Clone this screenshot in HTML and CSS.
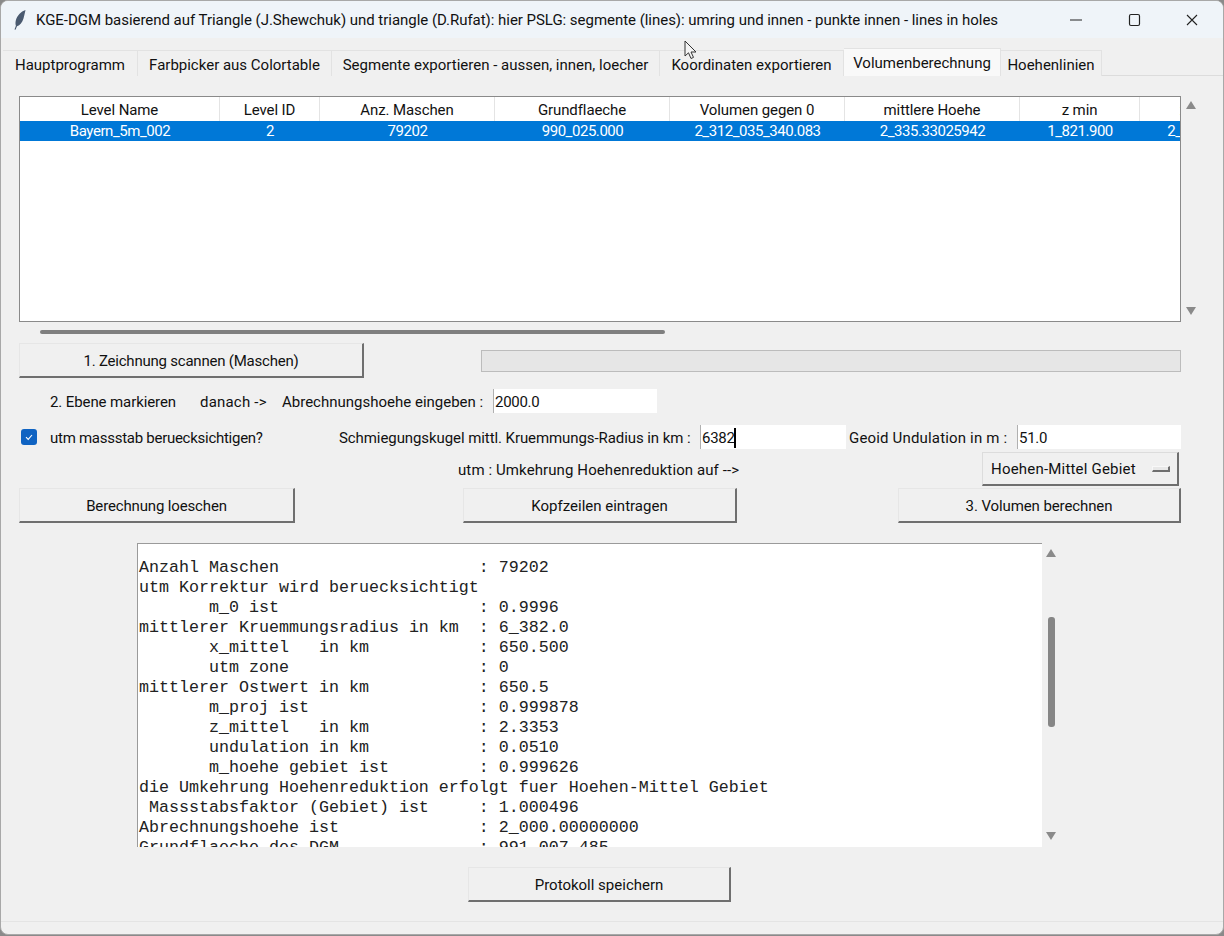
FILE: index.html
```html
<!DOCTYPE html>
<html lang="de">
<head>
<meta charset="utf-8">
<title>KGE-DGM</title>
<link rel="stylesheet" href="styles.css">
</head>
<body>
<div class="window">
  <header class="titlebar">
    <svg class="app-icon" width="14" height="22" viewBox="0 0 14 22"><path d="M12.5 1C8 2.500 4 6.500 2.800 11.500C2.300 13.800 2.500 15.500 2.900 16.800L1.500 20.500L2.500 20.800L4 17.300C7 16.500 9.300 13.500 10.500 9.500C11.300 6.500 12 3.500 12.500 1Z" fill="#4a5a70"/></svg>
    <div class="title-text">KGE-DGM basierend auf Triangle (J.Shewchuk) und triangle (D.Rufat): hier PSLG: segmente (lines): umring und innen - punkte innen - lines in holes</div>
    <div class="controls">
      <svg width="58" height="38" viewBox="0 0 58 38"><path d="M23 19H35" stroke="#222" stroke-width="1"/></svg>
      <svg width="58" height="38" viewBox="0 0 58 38"><rect x="24.500" y="13.500" width="10" height="11" rx="1.500" fill="none" stroke="#222" stroke-width="1.200"/></svg>
      <svg width="58" height="38" viewBox="0 0 58 38"><path d="M24 14L34 24M34 14L24 24" stroke="#222" stroke-width="1.100"/></svg>
    </div>
  </header>

  <nav class="tabs">
    <div class="tab t1">Hauptprogramm</div>
    <div class="tab t2">Farbpicker aus Colortable</div>
    <div class="tab t3">Segmente exportieren - aussen, innen, loecher</div>
    <div class="tab t4">Koordinaten exportieren</div>
    <div class="tab t5 active">Volumenberechnung</div>
    <div class="tab t6">Hoehenlinien</div>
  </nav>

  <main class="panel">
    <section class="tree-row">
      <div class="tree">
        <div class="tree-line tree-head">
          <div class="c c1">Level Name</div><div class="c c2">Level ID</div><div class="c c3">Anz. Maschen</div><div class="c c4">Grundflaeche</div><div class="c c5">Volumen gegen 0</div><div class="c c6">mittlere Hoehe</div><div class="c c7">z min</div><div class="c c8">z max</div>
        </div>
        <div class="tree-line tree-sel">
          <div class="c c1">Bayern_5m_002</div><div class="c c2">2</div><div class="c c3">79202</div><div class="c c4">990_025.000</div><div class="c c5">2_312_035_340.083</div><div class="c c6">2_335.33025942</div><div class="c c7">1_821.900</div><div class="c c8">2_849.100</div>
        </div>
      </div>
      <div class="vscroll tree-scroll">
        <span class="arrow up"></span>
        <span class="arrow down"></span>
      </div>
    </section>
    <div class="hscroll"></div>

    <div class="row row-scan">
      <button class="btn btn-scan">1. Zeichnung scannen (Maschen)</button>
      <div class="progress"></div>
    </div>

    <div class="row row-level">
      <span class="lbl l-mark">2. Ebene markieren</span>
      <span class="lbl l-then">danach -&gt;</span>
      <span class="lbl l-height">Abrechnungshoehe eingeben :</span>
      <div class="entry e-height">2000.0</div>
    </div>

    <div class="row row-utm">
      <span class="check"><svg width="10" height="10" viewBox="0 0 10 10"><path d="M2 5.200L4.200 7.400L8 3" fill="none" stroke="#fff" stroke-width="1.100"/></svg></span>
      <span class="lbl l-utm">utm massstab beruecksichtigen?</span>
      <span class="lbl l-radius">Schmiegungskugel mittl. Kruemmungs-Radius in km :</span>
      <div class="entry e-radius">6382<i class="caret"></i></div>
      <span class="lbl l-geoid">Geoid Undulation in m :</span>
      <div class="entry e-geoid">51.0</div>
    </div>

    <div class="row row-mode">
      <span class="lbl l-mode">utm : Umkehrung Hoehenreduktion auf --&gt;</span>
      <button class="btn btn-option">Hoehen-Mittel Gebiet<i class="indicator"></i></button>
    </div>

    <div class="row row-actions">
      <button class="btn btn-clear">Berechnung loeschen</button>
      <button class="btn btn-head">Kopfzeilen eintragen</button>
      <button class="btn btn-calc">3. Volumen berechnen</button>
    </div>

    <section class="log-row">
      <pre class="log">Anzahl Maschen                    : 79202
utm Korrektur wird beruecksichtigt
       m_0 ist                    : 0.9996
mittlerer Kruemmungsradius in km  : 6_382.0
       x_mittel   in km           : 650.500
       utm zone                   : 0
mittlerer Ostwert in km           : 650.5
       m_proj ist                 : 0.999878
       z_mittel   in km           : 2.3353
       undulation in km           : 0.0510
       m_hoehe gebiet ist         : 0.999626
die Umkehrung Hoehenreduktion erfolgt fuer Hoehen-Mittel Gebiet
 Massstabsfaktor (Gebiet) ist     : 1.000496
Abrechnungshoehe ist              : 2_000.00000000
Grundflaeche des DGM              : 991_007.485</pre>
      <div class="vscroll log-scroll">
        <span class="arrow up"></span>
        <span class="thumb"></span>
        <span class="arrow down"></span>
      </div>
    </section>

    <div class="row row-save">
      <button class="btn btn-save">Protokoll speichern</button>
    </div>
  </main>
  <svg class="cursor" width="14" height="21" viewBox="0 0 14 21"><path d="M1 1V16L4.500 12.800L7 18.500L9.500 17.400L7 12H12Z" fill="#f4f4f4" stroke="#333" stroke-width="1"/></svg>
</div>
</body>
</html>
```

FILE: styles.css
```css
* { box-sizing: border-box; }
html, body { margin: 0; padding: 0; }
body {
  width: 1224px;
  height: 936px;
  overflow: hidden;
  background: #8a8a8a;
  font-family: Roboto, "Noto Sans", sans-serif;
  font-size: 15px;
  color: #111;
}
.window {
  position: relative;
  width: 1224px;
  height: 935px;
  background: #f0f0f0;
  border: 1px solid #a8a8a8;
  border-radius: 8px;
  overflow: hidden;
}
.titlebar {
  display: flex;
  align-items: center;
  height: 37px;
  background: #eff4f9;
}
.app-icon { margin-left: 12px; flex: none; }
.title-text { margin-left: 9px; white-space: nowrap; flex: 1; overflow: hidden; letter-spacing: -0.035px; }
.controls { display: flex; flex: none; margin-right: 2px; }

.tabs {
  display: flex;
  align-items: flex-end;
  height: 38px;
  margin-left: 2px;
  border-bottom: 1px solid #dcdcdc;
}
.tab {
  height: 26px;
  line-height: 28px;
  text-align: center;
  white-space: nowrap;
  background: #f0f0f0;
  border: 1px solid #e2e2e2;
  border-bottom: none;
  margin-bottom: -1px;
  border-left: none;
}
.t1 { width: 135px; }
.t2 { width: 194px; }
.t3 { width: 328px; }
.t4 { width: 184px; }
.t5 { width: 157px; height: 28px; line-height: 28px; background: #f9f9f9; }
.t6 { width: 101px; }

.panel { padding-left: 18px; }

.tree-row { display: flex; margin-top: 20px; height: 226px; }
.tree {
  width: 1162px;
  height: 226px;
  background: #fff;
  border: 1px solid #8a8a8a;
  overflow: hidden;
}
.tree-line { display: flex; }
.tree-head { height: 24px; line-height: 26px; letter-spacing: -0.1px; }
.tree-head .c { border-right: 1px solid #e4e4e4; }
.tree-sel { height: 20px; line-height: 20px; background: #0078d7; color: #fff; letter-spacing: -0.45px; }
.c { flex: none; text-align: center; white-space: nowrap; overflow: hidden; }
.c1 { width: 200px; }
.c2 { width: 100px; }
.c3 { width: 175px; }
.c4 { width: 175px; }
.c5 { width: 175px; }
.c6 { width: 175px; }
.c7 { width: 120px; }
.c8 { width: 120px; }

.vscroll {
  display: flex;
  flex-direction: column;
  align-items: center;
  justify-content: space-between;
  width: 20px;
}
.tree-scroll { padding: 5px 0 7px; }
.log-scroll { padding: 6px 0 7px; width: 18px; position: relative; }
.arrow { width: 0; height: 0; border-left: 5px solid transparent; border-right: 5px solid transparent; }
.arrow.up { border-bottom: 8px solid #8a8a8a; }
.arrow.down { border-top: 8px solid #8a8a8a; }
.thumb {
  position: absolute;
  left: 6px;
  top: 74px;
  width: 7px;
  height: 110px;
  border-radius: 3px;
  background: #868686;
}

.hscroll {
  width: 625px;
  height: 4px;
  margin: 8px 0 0 21px;
  border-radius: 2px;
  background: #7f7f7f;
}

.row { display: flex; align-items: center; }
.btn {
  font: inherit;
  color: inherit;
  padding: 1px 0 0;
  height: 35px;
  background: #f0f0f0;
  border-style: solid;
  border-width: 1px 2px 2px 1px;
  border-color: #e6e6e6 #6f6f6f #6f6f6f #e6e6e6;
}
.lbl { white-space: nowrap; padding-top: 2px; }
.entry {
  height: 24px;
  line-height: 26px;
  background: #fff;
  border-left: 1px solid #b0b0b0;
  padding-left: 1px;
  letter-spacing: -0.3px;
}

.row-scan { margin-top: 9px; height: 35px; }
.btn-scan { width: 345px; letter-spacing: -0.22px; }
.progress {
  width: 700px;
  height: 22px;
  margin-left: 117px;
  background: #e6e6e6;
  border: 1px solid #bcbcbc;
}

.row-level { margin-top: 11px; height: 24px; }
.l-mark { margin-left: 31px; width: 126px; letter-spacing: -0.1px; }
.l-then { margin-left: 24px; width: 67px; letter-spacing: 0.2px; }
.l-height { margin-left: 15px; width: 201px; }
.e-height { margin-left: 10px; width: 164px; }

.row-utm { margin-top: 12px; height: 24px; }
.check {
  display: flex;
  align-items: center;
  justify-content: center;
  width: 16px;
  height: 16px;
  margin-left: 2px;
  border-radius: 3px;
  background: #0f63c2;
}
.l-utm { margin-left: 13px; width: 213px; letter-spacing: -0.27px; }
.l-radius { margin-left: 76px; width: 351px; letter-spacing: -0.08px; }
.e-radius { margin-left: 10px; width: 146px; }
.caret {
  display: inline-block;
  width: 2px;
  height: 20px;
  margin-left: -1px;
  background: #000;
  vertical-align: -5px;
}
.l-geoid { margin-left: 3px; width: 158px; letter-spacing: 0.17px; }
.e-geoid { margin-left: 10px; width: 164px; }

.row-mode { margin-top: 3px; height: 34px; }
.l-mode { margin-left: 439px; width: 282px; letter-spacing: 0.1px; }
.btn-option {
  display: flex;
  align-items: center;
  width: 197px;
  height: 34px;
  margin-left: 242px;
  padding-left: 8px;
  letter-spacing: 0.2px;
  border-top-color: #dcdcdc;
  border-left-color: #dcdcdc;
}
.indicator {
  display: block;
  width: 18px;
  height: 6px;
  margin-left: auto;
  margin-right: 7px;
  background: #e8e8e8;
  border-style: solid;
  border-width: 1px 2px 2px 1px;
  border-color: #f8f8f8 #6f6f6f #6f6f6f #f8f8f8;
}

.row-actions { margin-top: 2px; height: 35px; }
.btn-clear { width: 276px; letter-spacing: -0.15px; }
.btn-head { width: 274px; margin-left: 168px; }
.btn-calc { width: 283px; margin-left: 161px; letter-spacing: -0.1px; }

.log-row { display: flex; margin: 20px 0 0 118px; height: 304px; }
.log {
  width: 905px;
  height: 304px;
  margin: 0;
  padding: 14px 0 0 1px;
  overflow: hidden;
  background: #fff;
  border-top: 1px solid #9a9a9a;
  border-left: 1px solid #9a9a9a;
  font-family: "Liberation Mono", monospace;
  font-size: 16.67px;
  line-height: 20px;
  color: #222;
}

.row-save { margin: 20px 0 0 449px; height: 35px; }
.btn-save { width: 263px; }

.window::after {
  content: "";
  position: absolute;
  left: 0;
  right: 0;
  top: 920px;
  border-top: 1px solid #e4e4e4;
}
.cursor { position: absolute; left: 683px; top: 39px; }
```
